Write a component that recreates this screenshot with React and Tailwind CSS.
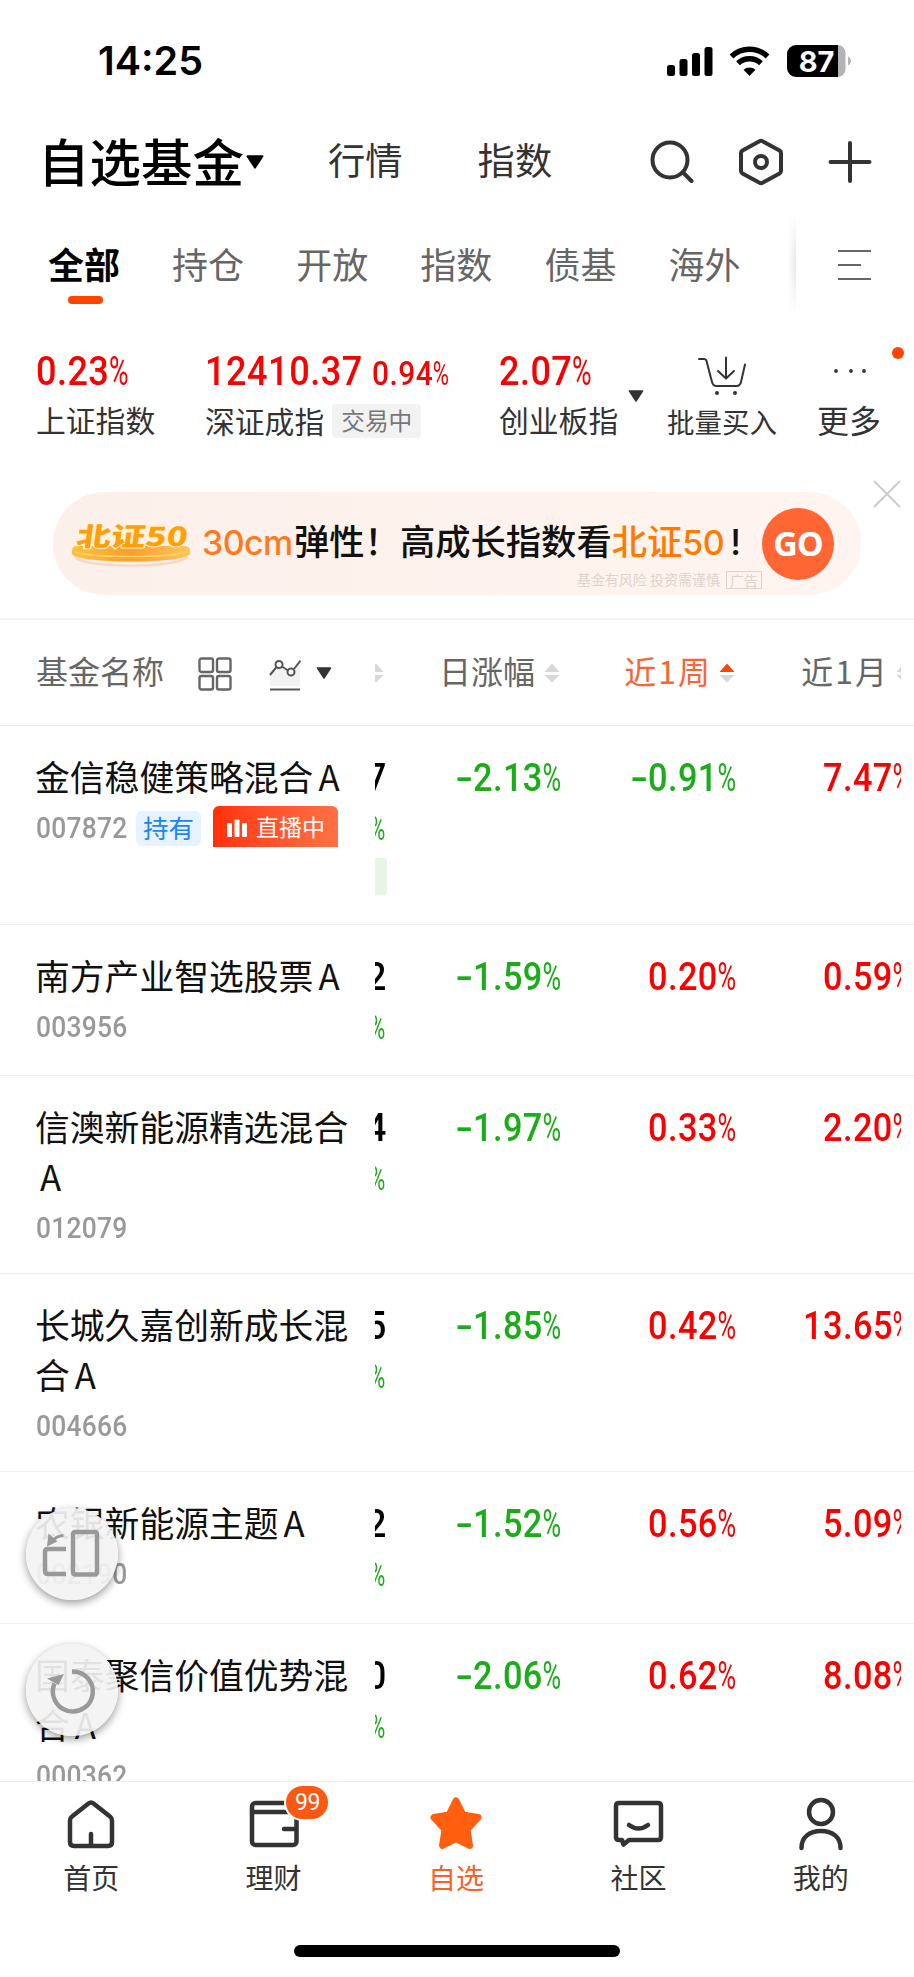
import clsx from "clsx";

const cjk = "font-['Noto_Sans_CJK_SC',sans-serif]";

const tabs = ["持仓", "开放", "指数", "债基", "海外"];

const funds = [
  { name: "金信稳健策略混合", code: "007872", last: "7", day: "-2.13", week: "-0.91", month: "7.47", held: true, height: "h-[199px]" },
  { name: "南方产业智选股票", code: "003956", last: "2", day: "-1.59", week: "0.20", month: "0.59", height: "h-[151px]" },
  { name: "信澳新能源精选混合", code: "012079", last: "4", day: "-1.97", week: "0.33", month: "2.20", height: "h-[198px]" },
  { name: "长城久嘉创新成长混合", code: "004666", last: "5", day: "-1.85", week: "0.42", month: "13.65", height: "h-[198px]" },
  { name: "农银新能源主题", code: "002190", last: "2", day: "-1.52", week: "0.56", month: "5.09", height: "h-[152px]" },
  { name: "国泰聚信价值优势混合", code: "000362", last: "0", day: "-2.06", week: "0.62", month: "8.08", height: "h-[158px]" },
];

// Condensed percentage, the % sign is thinner than the digits
function Percent({ value, size = "text-[39px]", className }) {
  const negative = value.startsWith("-");
  return (
    <span
      className={clsx(
        "flex shrink-0 scale-x-[0.88] font-['Roboto',sans-serif] font-medium tracking-[0.5px]",
        negative ? "text-[#1aad19]" : "text-[#fa0000]",
        size,
        className
      )}
    >
      {negative && <span className="w-[20px] origin-left scale-x-150">-</span>}
      <span>{value.replace("-", "")}</span>
      <span className="w-[0.53em]">
        <span className="block origin-left scale-x-[0.74] font-normal tracking-normal">%</span>
      </span>
    </span>
  );
}

function SortArrows({ active }) {
  return (
    <svg viewBox="0 0 16 20" className="ml-[9px] h-5 w-4 shrink-0">
      <path d="M8 0.5 15.5 9h-15z" fill={active ? "#ff4400" : "#d8d8d8"} />
      <path d="M8 19.5 15.5 12h-15z" fill="#d8d8d8" />
    </svg>
  );
}

function Caret({ className }) {
  return (
    <svg viewBox="0 0 16 12" className={className}>
      <path d="M1.5 1h13L8 11z" fill="currentColor" stroke="currentColor" strokeWidth="1.5" strokeLinejoin="round" />
    </svg>
  );
}

function StatusBar() {
  return (
    <div className="flex h-[122px] items-center pl-[98px] pr-[62px]">
      <span className="mt-[2px] font-['Inter',sans-serif] text-[39.5px] font-semibold">14:25</span>
      <svg viewBox="0 0 186 34" className="ml-auto h-[34px] w-[186px]">
        <rect x="1" y="21" width="8" height="11" rx="2.5" />
        <rect x="13.5" y="15" width="8" height="17" rx="2.5" />
        <rect x="26" y="9" width="8" height="23" rx="2.5" />
        <rect x="38.5" y="3" width="8" height="29" rx="2.5" />
        <g fill="none" stroke="#000" strokeWidth="5.5">
          <path d="M65.5 12.500a26 26 0 0 1 36 0" />
          <path d="M72 19.200a17 17 0 0 1 23 0" />
        </g>
        <path d="M83.500 32l-6-6.200a9 9 0 0 1 12 0z" />
        <path d="M130 1h42v32h-42a9 9 0 0 1-9-9V10a9 9 0 0 1 9-9z" />
        <path d="M172 1a8 8 0 0 1 7.500 8v16a8 8 0 0 1-7.500 8z" fill="#b3b3b3" />
        <path d="M182 12.500c4 2.500 4 6.500 0 9z" fill="#b3b3b3" />
        <text x="150.5" y="27.500" textAnchor="middle" fill="#fff" className="font-['Inter',sans-serif] text-[29px] font-bold">87</text>
      </svg>
    </div>
  );
}

function Header() {
  return (
    <div className="flex h-20 items-center pl-[38px] pr-[42px] text-[#333]">
      <span className="-mt-1 text-[51.5px] font-medium leading-none text-black">自选基金</span>
      <Caret className="ml-px h-[14px] w-[20px] text-black" />
      <span className="ml-[63px] -mt-1 text-[37.3px] leading-none">行情</span>
      <span className="ml-[75px] -mt-1 text-[37.3px] leading-none">指数</span>
      <svg viewBox="0 0 44 44" className="ml-auto h-11 w-11" fill="none" stroke="#333" strokeWidth="4" strokeLinecap="round">
        <circle cx="20" cy="20" r="17.5" />
        <path d="m33 32.500 8.500 8.500" />
      </svg>
      <svg viewBox="0 0 44 48" className="ml-[45px] h-12 w-11" fill="none" stroke="#333" strokeWidth="4" strokeLinejoin="round">
        <path d="M20.500 3.200q1.500-.8 3 0l17 9.300q1.500 1 1.500 2.500v18q0 1.500-1.500 2.500l-17 9.300q-1.500.8-3 0l-17-9.300Q2 34.500 2 33V15q0-1.500 1.500-2.500z" />
        <circle cx="22" cy="24" r="6" />
      </svg>
      <svg viewBox="0 0 44 44" className="ml-[45px] h-11 w-11" fill="none" stroke="#333" strokeWidth="4" strokeLinecap="round">
        <path d="M22 3v38M2.500 22h39" />
      </svg>
    </div>
  );
}

function Tabs() {
  return (
    <div className="mt-[9px] flex h-[106px] text-[36px] text-[#666]">
      <div className="flex flex-1 gap-[52.1px] overflow-hidden pl-12 pt-[34px] leading-[36px]">
        <div className="flex flex-col items-center text-black">
          <span className="font-bold">全部</span>
          <span className="ml-[2px] mt-[15px] h-2 w-[35px] rounded-full bg-[#ff4400]" />
        </div>
        {tabs.map((tab) => (
          <span key={tab} className="shrink-0">{tab}</span>
        ))}
      </div>
      <div className="h-full w-[9px] bg-gradient-to-l from-black/8 to-transparent [mask-image:linear-gradient(to_bottom,transparent,black_40%,black_60%,transparent)]" />
      <div className="flex w-[118px] items-center pl-[42px]">
        <svg viewBox="0 0 33 32" className="mt-[2px] h-8 w-[33px]" stroke="#666" strokeWidth="2.2">
          <path d="M0 2h33M0 16h23M0 30h33" />
        </svg>
      </div>
    </div>
  );
}

function Indices() {
  return (
    <div className="relative flex h-[175px] pl-9 pt-[29px] text-[29.8px] text-[#333]">
      <div className="w-[169px]">
        <Percent value="0.23" size="text-[41px]" className="h-[50px] origin-left items-center leading-[50px]" />
        <div className="mt-[6px] leading-[34px]">上证指数</div>
      </div>
      <div className="w-[294px]">
        <div className="flex h-[50px] items-center font-['Roboto',sans-serif] text-[#fa0000]">
          <span className="w-[167px] origin-left scale-x-[0.88] text-[41px] font-medium leading-[50px] tracking-[0.6px]">12410.37</span>
          <Percent value="0.94" size="text-[34px]" className="mt-[4px] origin-left leading-[50px]" />
        </div>
        <div className="mt-[6px] flex items-center leading-[34px]">
          深证成指
          <span className="ml-[8px] mt-[2px] h-[34px] rounded bg-[#f2f2f2] px-[9px] text-[23.7px] leading-[33px] text-[#777]">交易中</span>
        </div>
      </div>
      <div className="w-[120px]">
        <Percent value="2.07" size="text-[41px]" className="h-[50px] origin-left items-center leading-[50px]" />
        <div className="mt-[6px] leading-[34px]">创业板指</div>
      </div>
      <Caret className="ml-[9px] mt-[44px] h-3 w-4" />
      <div className="ml-[22px] flex w-[112px] flex-col items-center">
        <svg viewBox="0 0 50 40" className="mt-[10px] h-10 w-[50px]" fill="none" stroke="#333" strokeWidth="2" strokeLinecap="round" strokeLinejoin="round">
          <path d="M2 3h5q2 0 2.500 2L15 26q1 4 4.500 4h20q3.500 0 4.500-4l4-17.500" />
          <path d="M29 1.500V22M21 15l8 7.500 8-7.500" />
          <circle cx="20" cy="37" r="1" fill="#333" />
          <circle cx="38" cy="37" r="1" fill="#333" />
        </svg>
        <span className="mt-[8px] whitespace-nowrap text-[27.5px] leading-[34px]">批量买入</span>
      </div>
      <div className="ml-[31px] flex w-[80px] flex-col items-center">
        <svg viewBox="0 0 34 4" className="mt-[23px] h-1 w-[34px]" fill="#333">
          <circle cx="4" cy="2" r="1.9" />
          <circle cx="19" cy="2" r="1.9" />
          <circle cx="32" cy="2" r="1.9" />
        </svg>
        <span className="mt-[28px] text-[32px] leading-[36px]">更多</span>
      </div>
      <span className="absolute left-[892px] top-[30px] h-3 w-3 rounded-full bg-[#ff4400]" />
      <svg viewBox="0 0 28 28" className="absolute left-[873px] top-[163px] h-7 w-7" stroke="#ccc" strokeWidth="2">
        <path d="m1 1 26 26M27 1 1 27" />
      </svg>
    </div>
  );
}

function Banner() {
  return (
    <div className="ml-[53px] flex h-[103px] w-[808px] shrink-0 items-center rounded-full bg-gradient-to-r from-[#fcf0eb] to-[#fff4ef] pl-[18px]">
      <svg viewBox="0 0 120 46" className="h-[46px] w-[120px]">
        <defs>
          <linearGradient id="plate" x1="0" x2="1" y1="0" y2="0">
            <stop offset="0" stopColor="#ffc23d" />
            <stop offset="0.5" stopColor="#ff9d2a" />
            <stop offset="1" stopColor="#ffc65a" />
          </linearGradient>
        </defs>
        <path d="M3 33c4 14 110 14 114 0v3c-4 13-110 13-114 0z" fill="#fad5c6" />
        <path d="M1 29q0-4 6-4h106q6 0 6 4v4c-4 10-114 10-118 0z" fill="url(#plate)" />
        <path d="M4 31c20 6 92 6 112 0" fill="none" stroke="#ffd66b" strokeWidth="1.5" />
        <text x="4" y="25" textLength="111" lengthAdjust="spacingAndGlyphs" transform="skewX(-8) translate(4 0)" fill="#ff9f0a" stroke="#fff3d6" strokeWidth="2" paintOrder="stroke" className="font-['Noto_Sans_CJK_SC',sans-serif] text-[26px] font-black">北证50</text>
      </svg>
      <div className="ml-[11px] mt-[-2px] w-[560px]">
        <div className="mt-[23px] whitespace-nowrap text-[35.3px] font-medium leading-[40px] text-[#111]">
          <span className="inline-block w-[92px] font-['Inter',sans-serif] text-[34px] tracking-[-0.6px] text-[#ff7a1a]">30cm</span>弹性！高成长指数看<span className="text-[#ff7a00]">北证<span className="inline-block w-[42px] font-['Inter',sans-serif] text-[34px] tracking-[-0.6px]">50</span></span>
          <span className="ml-[6px] font-['Inter',sans-serif]">!</span>
        </div>
        <div className="mt-[8px] flex items-center justify-end text-[14px] leading-[17px] text-[#e0d2cc]">
          基金有风险 投资需谨慎
          <span className="ml-[6px] border border-[#e0d2cc] px-[3px] leading-[16px]">广告</span>
        </div>
      </div>
      <div className="flex h-[72px] w-[72px] items-center justify-center rounded-full bg-[#ff6633] font-['Open_Sans',sans-serif] text-[34px] font-bold tracking-[-1px] text-white">
        GO
      </div>
    </div>
  );
}

function TableHead() {
  return (
    <div className="mt-[23px] flex h-[107px] shrink-0 items-center border-t-2 border-[#f2f2f2] text-[32px] text-[#666]">
      <div className="flex w-[375px] shrink-0 items-center pl-[36px]">
        <span className="-mt-[6px]">基金名称</span>
        <svg viewBox="0 0 34 34" className="ml-[34px] mt-[2px] h-[34px] w-[34px]" fill="none" stroke="#666" strokeWidth="2.4">
          <rect x="1.5" y="1.5" width="13.5" height="13.5" rx="2" />
          <rect x="19" y="1.5" width="13.5" height="13.5" rx="2" />
          <rect x="1.5" y="19" width="13.5" height="13.5" rx="2" />
          <rect x="19" y="19" width="13.5" height="13.5" rx="2" />
        </svg>
        <svg viewBox="0 0 32 32" className="ml-[37px] mt-[4px] h-8 w-8" fill="none" stroke="#555" strokeWidth="2">
          <path d="M1 15 9 6l13 7 9-10v24H1z" fill="#f2f2f2" stroke="none" />
          <path d="M1 16 7.500 8M13 7.500l6 4M25 10l6.500-8.500" />
          <circle cx="10" cy="5.5" r="3.5" fill="#fff" />
          <circle cx="22" cy="13" r="3.5" fill="#fff" />
          <path d="M1 30.500h30" />
        </svg>
        <Caret className="ml-[15px] mt-px h-3 w-4 text-[#333]" />
      </div>
      <div className="flex w-[526px] items-center overflow-hidden">
        <div className="flex w-[9px] shrink-0 justify-end"><SortArrows /></div>
        <div className="flex w-[176px] shrink-0 items-center justify-end"><span className="-mt-[6px]">日涨幅</span><SortArrows /></div>
        <div className="flex w-[175px] shrink-0 items-center justify-end text-[#fa6432]">
          <span className="-mt-[6px] flex gap-[2px]">近<i className="not-italic">1</i>周</span><SortArrows active />
        </div>
        <div className="flex w-[177px] shrink-0 items-center justify-end">
          <span className="-mt-[6px] flex gap-[2px]">近<i className="not-italic">1</i>月</span><SortArrows />
        </div>
      </div>
    </div>
  );
}

function FundRow({ fund }) {
  return (
    <div className={clsx("flex shrink-0 overflow-hidden border-t border-[#f0f0f0] pt-[28px] leading-[49.5px]", fund.height)}>
      <div className="w-[375px] shrink-0 pl-[35px]">
        <div className="-mt-[2px] w-[318px] text-[34.8px] text-[#111]">
          {fund.name}<span className="pl-[5px]">A</span>
        </div>
        <div className="flex h-[50px] items-center pl-px pt-[3px]">
          <span className="w-[92px] origin-left scale-x-[0.88] font-['Roboto',sans-serif] text-[30px] font-medium tracking-[0.3px] text-[#999]">{fund.code}</span>
          {fund.held && (
            <>
              <span className="ml-[8px] h-[35px] rounded-md bg-[#e6f2fe] px-[7px] text-[25.5px] leading-[32px] text-[#1a86f0]">持有</span>
              <span className="ml-[12px] mt-[-3px] flex h-[41px] w-[125px] items-center rounded-t-md bg-gradient-to-r from-[#ff2f05] to-[#ff7044] pl-[14px] text-[23px] leading-none text-white">
                <svg viewBox="0 0 20 18" className="mr-[9px] mt-[3px] h-[18px] w-5" fill="#fff">
                  <rect y="4" width="5" height="14" rx="1" />
                  <rect x="7.5" y="0.5" width="5" height="17.5" rx="1" />
                  <rect x="15" y="4" width="5" height="14" rx="1" />
                </svg>
                <span>直播中</span>
              </span>
            </>
          )}
        </div>
      </div>
      <div className="flex w-[526px] overflow-hidden">
        <div className="flex w-[11px] shrink-0 flex-col items-end font-['Roboto',sans-serif]">
          <span className="origin-right scale-x-[0.88] text-[39px] font-medium text-black">{fund.last}</span>
          <span className="w-[16px] text-[33px] text-[#1aad19]">
            <span className="block origin-left scale-x-[0.63]">%</span>
          </span>
          {fund.held && <span className="mr-[-1px] mt-[5px] h-[37px] w-10 rounded bg-[#e6f5e6]" />}
        </div>
        <Percent value={fund.day} className="w-[175px] origin-right justify-end" />
        <Percent value={fund.week} className="w-[175px] origin-right justify-end" />
        <Percent value={fund.month} className="w-[175px] origin-right justify-end" />
      </div>
    </div>
  );
}

function FloatingButton({ className, children }) {
  return (
    <button className={clsx("absolute left-[26px] flex h-[92px] w-[92px] items-center justify-center rounded-full bg-[#f3f3f3]/92 shadow-[0_3px_9px_rgba(0,0,0,0.4)]", className)}>
      {children}
    </button>
  );
}

const navItems = [
  {
    label: "首页",
    icon: <path d="M7 20.500 23.500 7.500q2.500-2 5 0L45 20.500q2 1.500 2 4V46q0 4-4 4H9q-4 0-4-4V24.500q0-2.500 2-4zM26 38v11" />,
  },
  {
    label: "理财",
    badge: "99",
    icon: (
      <>
        <rect x="4" y="7" width="44.5" height="42" rx="3.5" />
        <path d="M4 16h44M36 33h12" />
      </>
    ),
  },
  {
    label: "自选",
    active: true,
    icon: (
      <path d="M26 5 33 19l15 2.500-11 12 2.500 16L26 42.500 12.500 49.500l2.500-16-11-12L19 19z" fill="#ff5f0f" stroke="#ff5f0f" strokeWidth="7" />
    ),
  },
  {
    label: "社区",
    icon: (
      <>
        <path d="M7 7h39q3 0 3 3v31q0 3-3 3H17l-5.500 4.500-1.500-4.500H7q-3 0-3-3V10q0-3 3-3z" />
        <path d="M17 29q9.500 7 19 0" />
      </>
    ),
  },
  {
    label: "我的",
    icon: (
      <>
        <circle cx="26" cy="16" r="12" />
        <path d="M6.500 52c0-11 8-17 19.500-17s19.500 6 19.500 17" />
      </>
    ),
  },
];

function BottomNav() {
  return (
    <nav className="flex h-[196px] shrink-0 flex-col border-t border-[#eee] bg-white">
      <div className="flex pr-[2px]">
        {navItems.map((item) => (
          <div key={item.label} className={clsx("relative flex flex-1 flex-col items-center pt-[14px] text-[28px]", item.active ? "text-[#fa6028]" : "text-[#333]")}>
            <svg viewBox="0 0 52 54" className="h-[54px] w-[52px] overflow-visible" fill="none" stroke="#333" strokeWidth="4.5" strokeLinecap="round" strokeLinejoin="round">
              {item.icon}
            </svg>
            <span className="mt-[9px] leading-[36px]">{item.label}</span>
            {item.badge && (
              <span className="absolute left-[102px] top-[2px] flex h-[37px] w-[46px] items-center justify-center rounded-full border-2 border-white bg-[#fb5814] pt-px font-['Roboto',sans-serif] text-[23px] tracking-[-0.5px] text-white">
                {item.badge}
              </span>
            )}
          </div>
        ))}
      </div>
      <div className="mx-auto mt-[50px] h-3 w-[326px] rounded-full bg-black" />
    </nav>
  );
}

export default function App() {
  return (
    <div className={clsx("relative flex h-[1977px] w-[914px] flex-col overflow-hidden bg-white text-black", cjk)}>
      <StatusBar />
      <Header />
      <Tabs />
      <Indices />
      <Banner />
      <TableHead />
      <div className="flex h-[1056px] shrink-0 flex-col overflow-hidden">
        {funds.map((fund) => (
          <FundRow key={fund.code} fund={fund} />
        ))}
      </div>
      <BottomNav />

      <FloatingButton className="top-[1508px]">
        <svg viewBox="0 0 92 92" className="h-[92px] w-[92px]" fill="none" stroke="#999" strokeWidth="4.5">
          <rect x="47" y="24" width="24" height="42.500" rx="2" />
          <path d="M40 41H22q-3 0-3 3v19q0 3 3 3h18" />
          <path d="M37.500 27.500q-8 .5-11 6" strokeWidth="3" />
          <path d="m22.500 25.500-1.500 13 10.500-5z" fill="#999" stroke="none" />
        </svg>
      </FloatingButton>
      <FloatingButton className="top-[1644px]">
        <svg viewBox="0 0 92 92" className="h-[92px] w-[92px]" fill="none" stroke="#999" strokeWidth="4.5">
          <path d="M46 27.500a20 20 0 1 1-17.500 12" />
          <path d="m21 34.500 17-4.500-5.500 11z" fill="#999" stroke="none" />
        </svg>
      </FloatingButton>
    </div>
  );
}
